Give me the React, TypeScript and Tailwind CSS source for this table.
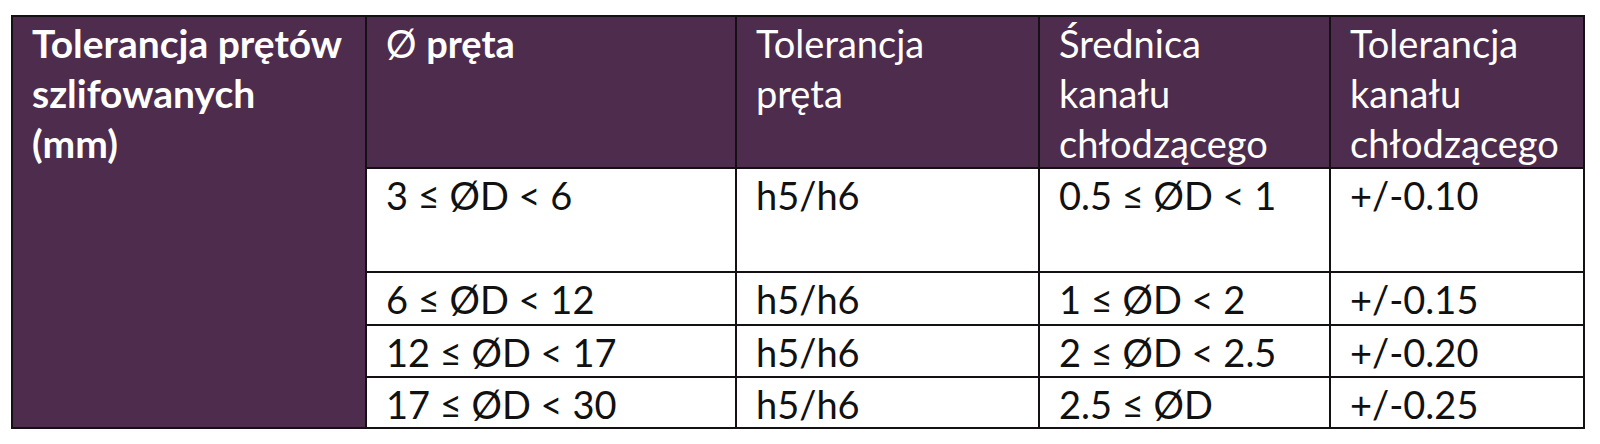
import React from 'react';

type Row = {
  rod: string;
  tol: string;
  channel: string;
  channelTol: string;
};

const rows: Row[] = [
  { rod: '3 ≤ ØD < 6', tol: 'h5/h6', channel: '0.5 ≤ ØD < 1', channelTol: '+/-0.10' },
  { rod: '6 ≤ ØD < 12', tol: 'h5/h6', channel: '1 ≤ ØD < 2', channelTol: '+/-0.15' },
  { rod: '12 ≤ ØD < 17', tol: 'h5/h6', channel: '2 ≤ ØD < 2.5', channelTol: '+/-0.20' },
  { rod: '17 ≤ ØD < 30', tol: 'h5/h6', channel: '2.5 ≤ ØD', channelTol: '+/-0.25' },
];

const headCell = 'bg-[#4e2c4d] text-white px-[19px] pt-[1px]';
const bodyCell = 'bg-white text-[#111] px-[19px] pt-[1px]';

const App: React.FC = () => {
  return (
    <div className="w-[1600px] h-[444px] bg-white pt-[15px] pl-[11px] font-['Lato',sans-serif] text-[38px] leading-[50px]">
      <div className="grid w-fit bg-[#141014] p-[2px] gap-[2px] grid-cols-[352px_368px_301px_289px_252px] grid-rows-[150px_102px_51px_50px_49px]">
        {/* first column spans the whole height */}
        <div className={`${headCell} row-span-5 font-bold text-[39px]`}>
          Tolerancja prętów
          <br />
          szlifowanych
          <br />
          (mm)
        </div>
        <div className={headCell}>
          Ø <span className="font-bold">pręta</span>
        </div>
        <div className={headCell}>
          Tolerancja
          <br />
          pręta
        </div>
        <div className={headCell}>
          Średnica
          <br />
          kanału
          <br />
          chłodzącego
        </div>
        <div className={headCell}>
          Tolerancja
          <br />
          kanału
          <br />
          chłodzącego
        </div>

        {rows.map((r) => (
          <React.Fragment key={r.rod}>
            <div className={bodyCell}>{r.rod}</div>
            <div className={bodyCell}>{r.tol}</div>
            <div className={bodyCell}>{r.channel}</div>
            <div className={bodyCell}>{r.channelTol}</div>
          </React.Fragment>
        ))}
      </div>
    </div>
  );
};

export default App;
